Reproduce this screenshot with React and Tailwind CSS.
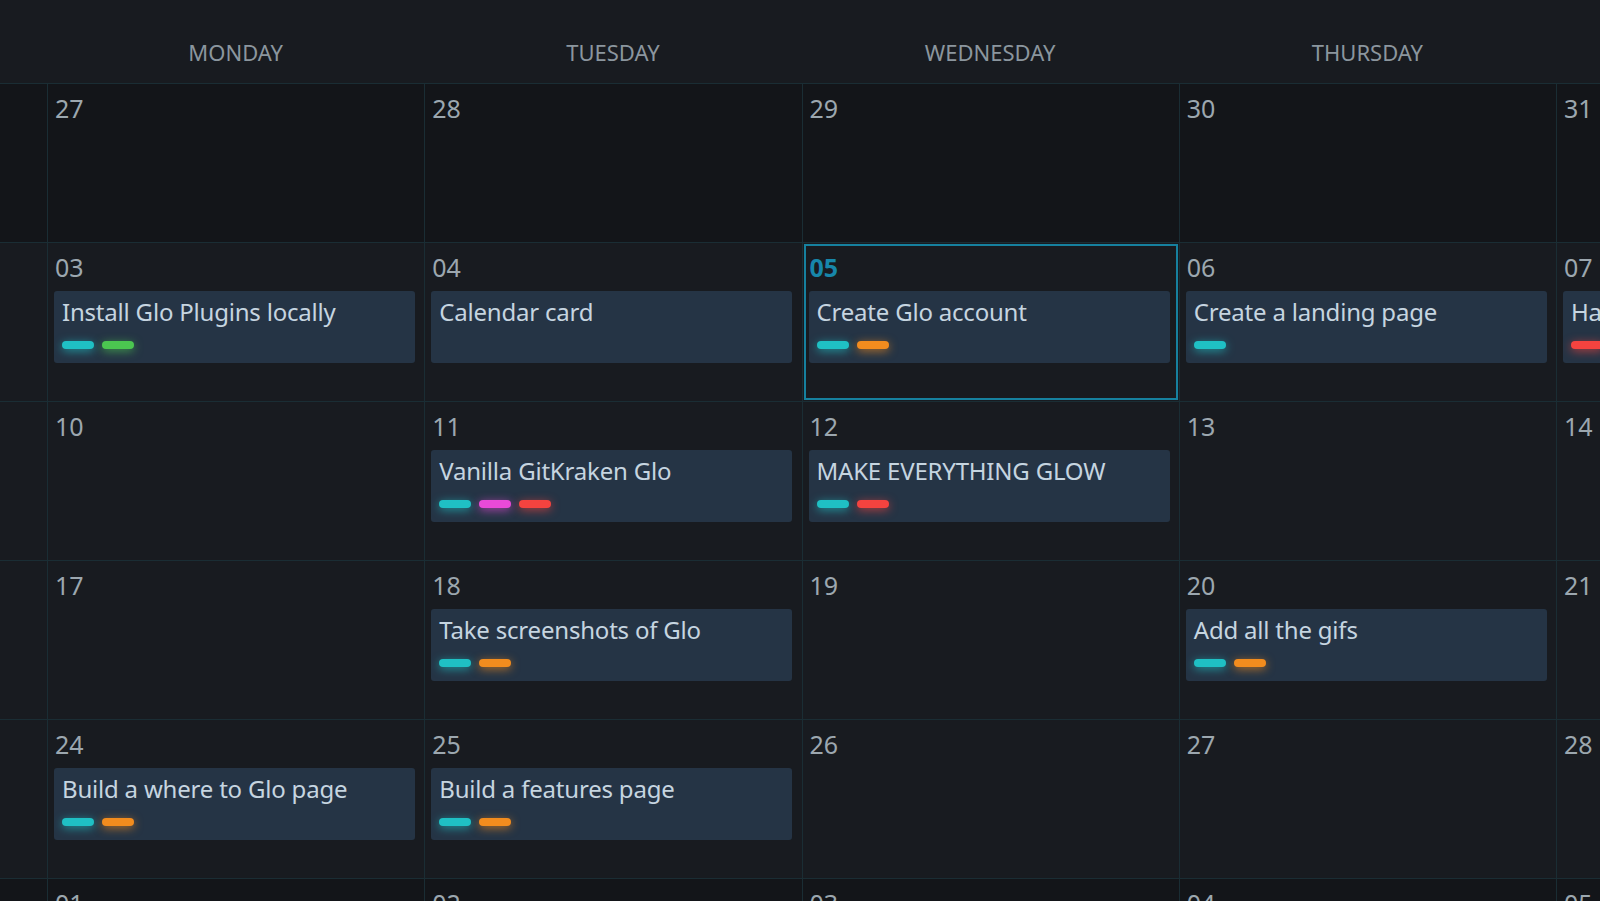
const LABEL = {
  cyan: "bg-[#1fc0c4] shadow-[0_2px_10px_rgba(31,192,196,0.7)]",
  green: "bg-[#4bc650] shadow-[0_2px_10px_rgba(75,198,80,0.7)]",
  orange: "bg-[#f28c1e] shadow-[0_2px_10px_rgba(242,140,30,0.7)]",
  red: "bg-[#f4433f] shadow-[0_2px_10px_rgba(244,67,63,0.7)]",
  pink: "bg-[#e94ad8] shadow-[0_2px_10px_rgba(233,74,216,0.7)]",
};

const weeks = [
  {
    dim: true,
    days: [
      { n: "27" },
      { n: "28" },
      { n: "29" },
      { n: "30" },
      { n: "31" },
    ],
  },
  {
    days: [
      { n: "03", card: { title: "Install Glo Plugins locally", labels: ["cyan", "green"] } },
      { n: "04", card: { title: "Calendar card", labels: [] } },
      { n: "05", today: true, card: { title: "Create Glo account", labels: ["cyan", "orange"] } },
      { n: "06", card: { title: "Create a landing page", labels: ["cyan"] } },
      { n: "07", card: { title: "Hack on Glo", labels: ["red"] } },
    ],
  },
  {
    days: [
      { n: "10" },
      { n: "11", card: { title: "Vanilla GitKraken Glo", labels: ["cyan", "pink", "red"] } },
      { n: "12", card: { title: "MAKE EVERYTHING GLOW", labels: ["cyan", "red"] } },
      { n: "13" },
      { n: "14" },
    ],
  },
  {
    days: [
      { n: "17" },
      { n: "18", card: { title: "Take screenshots of Glo", labels: ["cyan", "orange"] } },
      { n: "19" },
      { n: "20", card: { title: "Add all the gifs", labels: ["cyan", "orange"] } },
      { n: "21" },
    ],
  },
  {
    days: [
      { n: "24", card: { title: "Build a where to Glo page", labels: ["cyan", "orange"] } },
      { n: "25", card: { title: "Build a features page", labels: ["cyan", "orange"] } },
      { n: "26" },
      { n: "27" },
      { n: "28" },
    ],
  },
  {
    dim: true,
    days: [{ n: "01" }, { n: "02" }, { n: "03" }, { n: "04" }, { n: "05" }],
  },
];

const COLS = "grid grid-cols-[47px_repeat(4,minmax(0,1fr))_44px]";

function Card({ card }) {
  return (
    <div className="ml-[6px] mt-[6px] h-[72px] w-[361px] shrink-0 overflow-hidden rounded-[3px] bg-[#253445] px-[8px] pt-[4px]">
      <div className="whitespace-nowrap text-[24px] leading-[33px] tracking-[-0.2px] text-[#c6d5e0]">
        {card.title}
      </div>
      <div className="mt-[13px] flex gap-[8px]">
        {card.labels.map((l, i) => (
          <span key={i} className={`h-[8px] w-[32px] rounded-full ${LABEL[l]}`} />
        ))}
      </div>
    </div>
  );
}

function Day({ day, dim }) {
  return (
    <div className={`relative min-w-0 overflow-hidden border-l border-[#1a2d34] ${dim ? "bg-[#131519]" : ""}`}>
      {day.today && (
        <div className="pointer-events-none absolute inset-x-[1px] inset-y-[1px] border-2 border-[#16819f]" />
      )}
      <div
        className={`pl-[7px] pt-[6px] text-[25px] leading-[36px] ${
          day.today ? "font-bold text-[#1787aa]" : "text-[#9ca7af]"
        }`}
      >
        {day.n}
      </div>
      {day.card && <Card card={day.card} />}
    </div>
  );
}

export default function App() {
  return (
    <main
      className="h-[901px] w-full overflow-hidden bg-[#181b20]"
      style={{ fontFamily: '"Noto Sans", "Open Sans", sans-serif' }}
    >
      <header className={`${COLS} h-[84px] border-b border-[#1a2d34]`}>
        <div />
        {["MONDAY", "TUESDAY", "WEDNESDAY", "THURSDAY"].map((d) => (
          <div key={d} className="pt-[37px] text-center text-[22px] leading-[30px] text-[#8b969e]">
            {d}
          </div>
        ))}
        <div />
      </header>
      {weeks.map((w, i) => (
        <div key={i} className={`${COLS} h-[159px] border-b border-[#1a2d34]`}>
          <div className={w.dim ? "bg-[#131519]" : ""} />
          {w.days.map((d, j) => (
            <Day key={j} day={d} dim={w.dim} />
          ))}
        </div>
      ))}
    </main>
  );
}
